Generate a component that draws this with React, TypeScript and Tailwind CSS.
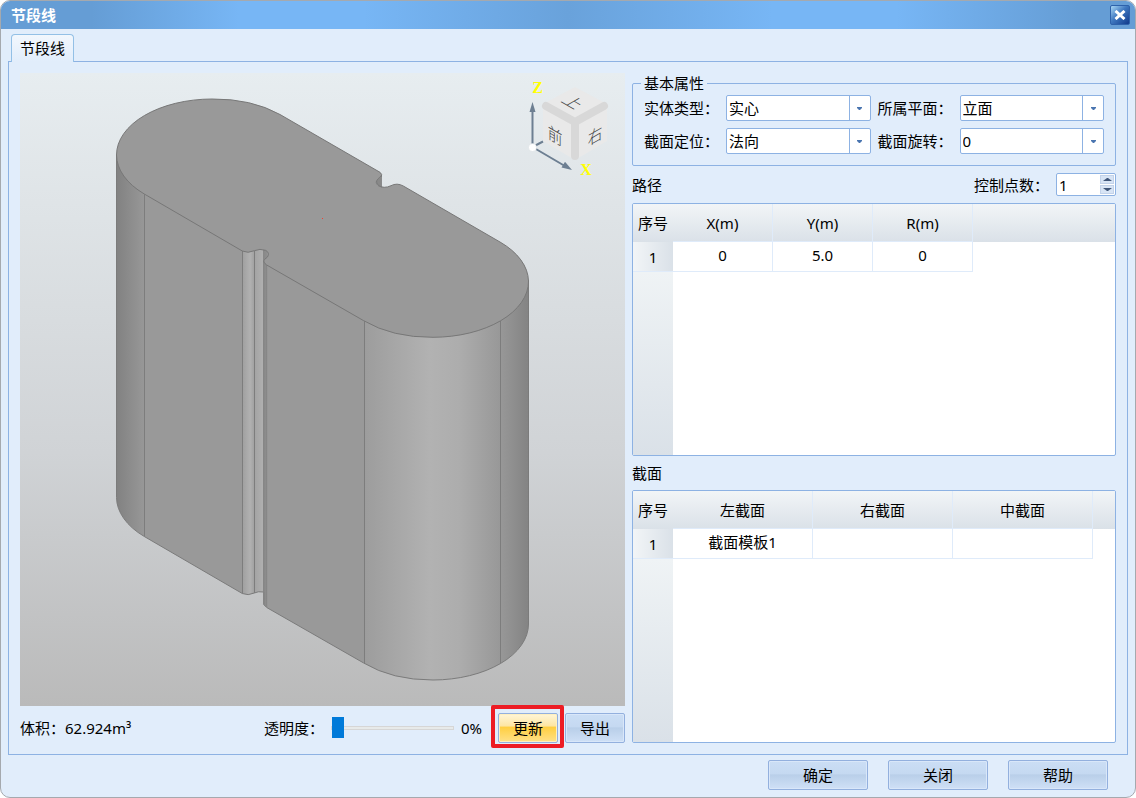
import { useState } from 'react';
import type { ReactNode } from 'react';

type Column = { label: string; width: number };

const PATH_COLUMNS: Column[] = [
  { label: 'X(m)', width: 100 },
  { label: 'Y(m)', width: 100 },
  { label: 'R(m)', width: 100 },
];

const SECTION_COLUMNS: Column[] = [
  { label: '左截面', width: 140 },
  { label: '右截面', width: 140 },
  { label: '中截面', width: 140 },
];

function SelectField({ id, label, options }: { id: string; label: string; options: string[] }) {
  return (
    <>
      <label htmlFor={id} className="whitespace-nowrap">{label}</label>
      <div className="relative">
        <select
          id={id}
          className="block h-[26px] w-full appearance-none rounded-xs border border-[#8db2e3] bg-white pl-0.5 pr-6 leading-5 outline-none"
        >
          {options.map((o) => (
            <option key={o}>{o}</option>
          ))}
        </select>
        <span className="pointer-events-none absolute inset-y-px right-px flex w-[21px] items-center justify-center border-l border-[#8db2e3]">
          <svg width="5" height="3" viewBox="0 0 5 3" fill="#4a75b0">
            <path d="M0 0h5v1L3 3H2L0 1z" />
          </svg>
        </span>
      </div>
    </>
  );
}

function DialogButton({ children, className }: { children: ReactNode; className: string }) {
  return (
    <button
      type="button"
      className={`h-[30px] rounded-xs border border-[#93b0de] bg-[linear-gradient(#cbdef5,#c5d9f1_45%,#b9cfe9_50%,#cfe0f6)] inset-shadow-[0_0_0_1px_#d9e7f9] ${className}`}
    >
      {children}
    </button>
  );
}

function DataTable({ label, columns, rows }: { label: string; columns: Column[]; rows: string[][] }) {
  return (
    <div className="flex min-h-0 flex-1 flex-col overflow-hidden rounded-xs border border-[#8db2e3] bg-white">
      <table aria-label={label} className="w-full table-fixed border-separate border-spacing-0 text-center">
        <colgroup>
          <col className="w-10" />
          {columns.map((c) => (
            <col key={c.label} style={{ width: c.width }} />
          ))}
          <col />
        </colgroup>
        <thead>
          <tr className="h-[38px] bg-linear-to-b from-[#f2f5f7] to-[#dae1e8]">
            <th className="p-0 font-normal">序号</th>
            {columns.map((c) => (
              <th key={c.label} className="border-b border-r border-[#dfebfa] p-0 font-normal">{c.label}</th>
            ))}
            <th className="p-0" />
          </tr>
        </thead>
        <tbody>
          {rows.map((row, i) => (
            <tr key={i} className="h-[30px]">
              <th className="border-b border-[#dfebfa] bg-linear-to-r from-[#f2f5f7] to-[#dae1e8] p-0 font-normal">{i + 1}</th>
              {row.map((cell, j) => (
                <td key={j} className="border-b border-r border-[#dfebfa] p-0 pb-1">{cell}</td>
              ))}
              <td className="p-0" />
            </tr>
          ))}
        </tbody>
      </table>
      <div className="w-10 flex-1 bg-linear-to-b from-[#eff3f5] to-[#dae1e8]" />
    </div>
  );
}

function ViewCube() {
  return (
    <g>
      <path d="M575 87L607 104V141L575 160L543 141V104Z" fill="#e9e9e9" />
      <path d="M546 106L575 122L604 106M575 122V156" fill="none" stroke="#d8d8d8" strokeWidth="8" strokeLinecap="round" strokeLinejoin="round" />
      <g fill="#444" fontFamily='"Noto Sans CJK SC", sans-serif' fontWeight="300" fontSize="17" textAnchor="middle">
        <text transform="matrix(.866 .5 -.866 .5 572 103)" y="5">上</text>
        <text transform="matrix(.866 .5 0 1 555 136)" y="6">前</text>
        <text transform="matrix(.866 -.5 0 1 595 136)" y="6">右</text>
      </g>
      {/* axis triad */}
      <g stroke="#6d7f92" strokeWidth="2" fill="none">
        <path d="M532.500 147V110M532.500 147L564 165.500M532.500 147L543 141.500" />
      </g>
      <path d="M532.500 102L535.500 112H529.500Z" fill="#6d7f92" />
      <path d="M572 170L561.500 167.500L565 161.800Z" fill="#6d7f92" />
      <circle cx="532.500" cy="147.500" r="4" fill="#fff" stroke="#d5dade" strokeWidth="0.500" />
      <g fill="#ff0" fontFamily='"Liberation Serif", serif' fontWeight="700" fontSize="16" textAnchor="middle">
        <text x="537.500" y="93">Z</text>
        <text x="586" y="175">X</text>
      </g>
    </g>
  );
}

function ModelView() {
  return (
    <div className="relative min-h-0 flex-1 bg-linear-to-b from-[#e7edf0] via-[#d0d3d6] via-60% to-[#bababa]">
      <svg className="absolute inset-0 size-full" viewBox="20 73 605 633" role="img" aria-label="节段线">
        <defs>
          <linearGradient id="side" gradientUnits="userSpaceOnUse" x1="116" y1="0" x2="529" y2="0">
            <stop offset="0" stopColor="#818181" />
            <stop offset="0.067" stopColor="#979797" />
            <stop offset="0.068" stopColor="#999" />
            <stop offset="0.306" stopColor="#999" />
            <stop offset="0.307" stopColor="#a0a0a0" />
            <stop offset="0.325" stopColor="#b1b1b1" />
            <stop offset="0.334" stopColor="#a2a2a2" />
            <stop offset="0.340" stopColor="#a6a6a6" />
            <stop offset="0.356" stopColor="#b0b0b0" />
            <stop offset="0.357" stopColor="#888" />
            <stop offset="0.365" stopColor="#8e8e8e" />
            <stop offset="0.366" stopColor="#999" />
            <stop offset="0.600" stopColor="#999" />
            <stop offset="0.605" stopColor="#9d9d9d" />
            <stop offset="0.760" stopColor="#b2b2b2" />
            <stop offset="0.830" stopColor="#adadad" />
            <stop offset="0.930" stopColor="#989898" />
            <stop offset="1" stopColor="#838383" />
          </linearGradient>
        </defs>

        {/* side walls */}
        <path
          d="M116.500 155V497.500A96 56 0 0 0 144.300 536.500L242.300 593.500Q248 596 254.300 593Q258 591 263.700 592V604.500L266.700 607.500L363.700 663A96 56 0 0 0 433 680A96 56 0 0 0 528.500 624V281Z"
          fill="url(#side)"
          stroke="#7b7b7b"
        />
        <path d="M144.500 194V536.500M242.500 251V593.500M254.500 251V593M364.500 321V663.500M500.500 321V663.500" stroke="#7d7d7d" fill="none" />
        <path d="M263.700 261V604M266.700 265V607" stroke="#858585" fill="none" />

        {/* top face */}
        <path
          d="M144.300 194A96 56 0 0 1 116.500 155A96 56 0 0 1 212 99A96 56 0 0 1 280 114.500L380 172.300Q382.800 174.500 381 177L378 179Q374.500 182 378 185.500Q384 189 391 185.700Q397 182.500 403.300 186L500 242A96 56 0 0 1 528.500 281A96 56 0 0 1 433 337.300A96 56 0 0 1 363.700 320.700L266.700 265Q262.500 262 264.500 259.500L267.500 257Q270 252.500 265.500 250.300Q260 248.300 254.300 250.700Q248 253.700 242.300 251Z"
          fill="#999"
          stroke="#777"
        />
        <path d="M381.500 175.500V187Q377 185.500 376.500 182Q376.500 179.500 381.500 175.500Z" fill="#898989" stroke="#777" strokeWidth="0.700" />
        <rect x="322" y="218" width="1" height="1" fill="#f04030" />
        <ViewCube />
      </svg>
    </div>
  );
}

export default function App() {
  const [opacity, setOpacity] = useState(0);
  const [points, setPoints] = useState(1);

  return (
    <div className="flex min-h-screen flex-col overflow-hidden rounded-[10px] border border-[#a5a9ae] bg-[#e1edfb] font-['Noto_Sans','Noto_Sans_CJK_SC',sans-serif] text-[15px] leading-5 text-black">
      <header className="flex h-7 items-center justify-between bg-[linear-gradient(90deg,#659dd5_8%,#77b6f5_21%,#77b6f5_32%,#69a2db_50%,#77b6f5_68%,#77b6f5_79%,#659dd5_95%)] pl-[10px] pr-[5px]">
        <h1 className="font-bold text-white">节段线</h1>
        <button
          type="button"
          aria-label="关闭窗口"
          className="flex size-5 items-center justify-center rounded-xs border border-[#2e62ab] bg-linear-to-br from-[#a9d8f5] via-[#3f78c0] via-45% to-[#123a8c]"
        >
          <svg width="12" height="10" viewBox="0 0 12 10" stroke="#fff" strokeWidth="3">
            <path d="M1.500 1L10.500 9M10.500 1L1.500 9" />
          </svg>
        </button>
      </header>

      <div role="tablist" className="relative -mb-px flex px-[10px] pt-[5px]">
        <button
          type="button"
          role="tab"
          aria-selected="true"
          className="h-7 w-[63px] rounded-t-sm border border-b-0 border-[#93c0e6] bg-linear-to-b from-[#f2f7fd] to-[#e1edfb] pb-0.5"
        >
          节段线
        </button>
      </div>

      <main className="mx-[7px] grid flex-1 grid-cols-[5fr_4fr] gap-[7px] border border-[#8db2e3] p-[11px]">
        <section className="flex min-w-0 flex-col gap-[7px]">
          <ModelView />
          <div className="flex h-[30px] items-center gap-[7px]">
            <span className="mr-auto">体积：62.924m³</span>
            <label htmlFor="opacity">透明度：</label>
            <input
              id="opacity"
              type="range"
              min={0}
              max={100}
              value={opacity}
              onChange={(e) => setOpacity(Number(e.target.value))}
              className="h-[21px] w-[123px] appearance-none bg-transparent [&::-webkit-slider-runnable-track]:h-1 [&::-webkit-slider-runnable-track]:border [&::-webkit-slider-runnable-track]:border-[#d6d6d6] [&::-webkit-slider-runnable-track]:bg-[#e7eaea] [&::-webkit-slider-thumb]:-mt-[10px] [&::-webkit-slider-thumb]:h-[21px] [&::-webkit-slider-thumb]:w-3 [&::-webkit-slider-thumb]:appearance-none [&::-webkit-slider-thumb]:bg-[#007ad9]"
            />
            <output htmlFor="opacity" className="mr-[9px]">{opacity}%</output>
            <div className="relative">
              <button
                type="button"
                className="h-[30px] w-[60px] rounded-xs border border-[#93b0de] bg-[linear-gradient(#fff6d9,#fde6a4_42%,#ffcf42_48%,#ffe188)] inset-shadow-[0_0_0_1px_#fff0c0]"
              >
                更新
              </button>
              <span className="pointer-events-none absolute -bottom-[5px] -left-[7px] -right-[6px] -top-2 rounded-xs border-4 border-[#ed1c24]" />
            </div>
            <DialogButton className="w-[60px]">导出</DialogButton>
          </div>
        </section>

        <section className="flex min-w-0 flex-col gap-[7px]">
          <fieldset className="rounded-xs border border-[#8db2e3] px-[11px] pb-[11px] pt-0.5">
            <legend className="-ml-[3px] px-[3px]">基本属性</legend>
            <div className="grid grid-cols-[auto_1fr_auto_1fr] items-center gap-[7px]">
              <SelectField id="entity" label="实体类型：" options={['实心', '空心']} />
              <SelectField id="plane" label="所属平面：" options={['立面', '平面']} />
              <SelectField id="locate" label="截面定位：" options={['法向', '竖向']} />
              <SelectField id="rotate" label="截面旋转：" options={['0', '90', '180', '270']} />
            </div>
          </fieldset>

          <div className="flex h-[23px] items-center gap-[7px]">
            <h2 className="mr-auto">路径</h2>
            <label htmlFor="points">控制点数：</label>
            <div className="flex h-[23px] w-[60px] rounded-xs border border-[#8db2e3] bg-white p-px">
              <input
                id="points"
                inputMode="numeric"
                value={points}
                onChange={(e) => setPoints(Number(e.target.value) || 1)}
                className="min-w-0 flex-1 pl-px leading-5 outline-none"
              />
              <div className="flex w-[14px] flex-col gap-px">
                <button type="button" aria-label="增加" onClick={() => setPoints(points + 1)} className="flex flex-1 items-center justify-center border border-[#c3d3ea] bg-[#d7e4f5]">
                  <svg width="9" height="3" viewBox="0 0 9 3" fill="#3f5578"><path d="M4 0h1L9 3H0Z" /></svg>
                </button>
                <button type="button" aria-label="减少" onClick={() => setPoints(Math.max(1, points - 1))} className="flex flex-1 items-center justify-center border border-[#c3d3ea] bg-[#d7e4f5]">
                  <svg width="9" height="3" viewBox="0 0 9 3" fill="#3f5578"><path d="M4 3h1L9 0H0Z" /></svg>
                </button>
              </div>
            </div>
          </div>
          <DataTable label="路径" columns={PATH_COLUMNS} rows={[['0', '5.0', '0']]} />

          <h2>截面</h2>
          <DataTable label="截面" columns={SECTION_COLUMNS} rows={[['截面模板1', '', '']]} />
        </section>
      </main>

      <footer className="flex justify-end gap-5 pb-[7px] pl-5 pr-[27px] pt-[5px]">
        <DialogButton className="w-[100px]">确定</DialogButton>
        <DialogButton className="w-[100px]">关闭</DialogButton>
        <DialogButton className="w-[100px]">帮助</DialogButton>
      </footer>
    </div>
  );
}
